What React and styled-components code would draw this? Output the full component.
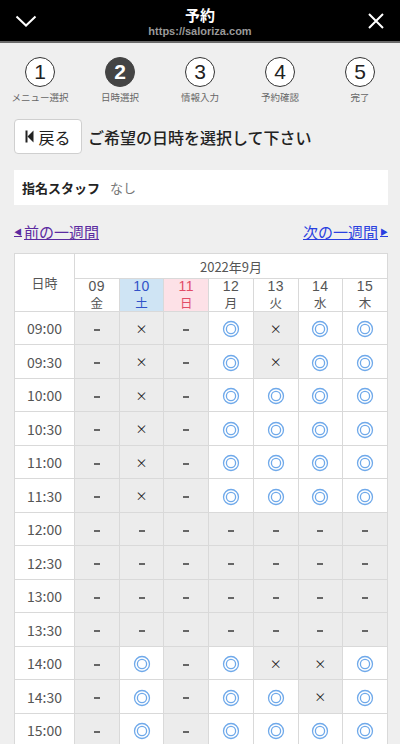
import React from 'react';
import styled, { createGlobalStyle } from 'styled-components';

const GlobalStyle = createGlobalStyle`
  body {
    margin: 0;
    background: #efefef;
    font-family: "Noto Sans CJK JP", "Noto Sans", sans-serif;
    color: #333;
  }
`;

const Page = styled.div`
  width: 400px;
  min-height: 744px;
  background: #efefef;
`;

const Header = styled.header`
  height: 41px;
  background: #000;
  border-bottom: 2px solid #6a6a6a;
  display: grid;
  grid-template-columns: 60px 1fr 60px;
  align-items: center;
`;

const HeaderTitle = styled.div`
  display: flex;
  flex-direction: column;
  align-items: center;
  line-height: 1;
`;

const TitleMain = styled.div`
  color: #fff;
  font-size: 15px;
  font-weight: 700;
  margin-top: 2px;
`;

const TitleUrl = styled.div`
  color: #9a9a9a;
  font-size: 11px;
  font-weight: 700;
  margin-top: 4px;
  font-family: "Liberation Sans", Arial, sans-serif;
`;

const IconCell = styled.div`
  display: flex;
  justify-content: ${(p) => (p.right ? 'flex-end' : 'flex-start')};
  padding: ${(p) => (p.right ? '0 16px 0 0' : '0 0 0 15px')};
`;

const Steps = styled.ol`
  list-style: none;
  margin: 0;
  padding: 14px 0 0;
  display: grid;
  grid-template-columns: repeat(5, 80px);
`;

const Step = styled.li`
  display: flex;
  flex-direction: column;
  align-items: center;
`;

const StepCircle = styled.div`
  width: 30px;
  height: 30px;
  box-sizing: border-box;
  border-radius: 50%;
  border: 1.5px solid ${(p) => (p.active ? '#444' : '#333')};
  background: ${(p) => (p.active ? '#444' : '#fff')};
  color: ${(p) => (p.active ? '#fff' : '#222')};
  font-weight: ${(p) => (p.active ? 700 : 400)};
  font-family: "Liberation Sans", Arial, sans-serif;
  font-size: 21px;
  display: flex;
  align-items: center;
  justify-content: center;
`;

const StepLabel = styled.div`
  font-size: 9.5px;
  color: #666;
  margin-top: 3px;
  line-height: 14px;
`;

const Heading = styled.div`
  display: flex;
  align-items: center;
  gap: 6px;
  padding: 15px 14px 0;
`;

const BackButton = styled.button`
  width: 68px;
  height: 35px;
  box-sizing: border-box;
  background: #fff;
  border: 1px solid #cfcfcf;
  border-radius: 4px;
  display: flex;
  align-items: center;
  justify-content: center;
  gap: 4px;
  font-family: inherit;
  font-size: 16px;
  color: #222;
  padding: 0;
`;

const HeadingText = styled.h1`
  margin: 0;
  font-size: 16px;
  font-weight: 500;
  color: #222;
`;

const StaffRow = styled.div`
  margin: 16px 12px 0 14px;
  height: 35px;
  background: #fff;
  display: flex;
  align-items: center;
  padding-left: 8px;
  font-size: 13px;
`;

const StaffLabel = styled.span`
  font-weight: 700;
  color: #222;
  width: 88px;
`;

const StaffValue = styled.span`
  color: #777;
`;

const WeekNav = styled.nav`
  display: flex;
  justify-content: space-between;
  padding: 16px 12px 0 14px;
  height: 22px;
`;

const WeekLink = styled.a`
  font-size: 15px;
  color: ${(p) => (p.visited ? '#5b2aa0' : '#2a3fe0')};
  text-decoration: underline;
  display: flex;
  align-items: center;
  gap: 2px;
  line-height: 20px;
`;

const Arrow = styled.span`
  font-size: 8px;
  text-decoration: none;
  display: inline-block;
`;

const Table = styled.table`
  margin: 10px 0 0 14px;
  width: 374px;
  border-collapse: collapse;
  table-layout: fixed;
  font-size: 13px;
  color: #555;
  text-align: center;
`;

const Th = styled.th`
  border: 1px solid #d9d9d9;
  background: ${(p) => p.bg || '#fff'};
  color: ${(p) => p.color || '#555'};
  font-weight: 400;
  padding: 0;
  line-height: 15px;
  height: ${(p) => p.h || 'auto'};
`;

const DayNum = styled.div`
  font-family: "Liberation Sans", Arial, sans-serif;
  font-size: 14px;
  line-height: 15px;
  letter-spacing: 0.5px;
`;

const DayName = styled.div`
  font-size: 12.5px;
  line-height: 16px;
  margin-top: 1px;
`;

const Tr = styled.tr`
  height: 33px;
  &:nth-child(even) {
    height: 34px;
  }
`;

const TimeCell = styled.td`
  border: 1px solid #d9d9d9;
  background: #fff;
  color: #555;
  font-size: 14px;
  padding: 0;
`;

const SlotCell = styled.td`
  border: 1px solid #d9d9d9;
  background: ${(p) => (p.open ? '#fff' : '#ececec')};
  padding: 0;
  vertical-align: middle;
`;

const Dash = styled.span`
  display: inline-block;
  width: 6px;
  height: 2px;
  background: #666;
  vertical-align: middle;
`;

const Cross = styled.span`
  font-size: 12px;
  color: #222;
  line-height: 1;
`;

const ChevronDown = () => (
  <svg width="22" height="14" viewBox="0 0 22 14">
    <polyline points="1.5,2.5 11,11.5 20.5,2.5" fill="none" stroke="#fff" strokeWidth="2" />
  </svg>
);

const CloseIcon = () => (
  <svg width="16" height="16" viewBox="0 0 16 16">
    <path d="M1 1L15 15M15 1L1 15" stroke="#fff" strokeWidth="2" />
  </svg>
);

const BackIcon = () => (
  <svg width="9" height="13" viewBox="0 0 9 13">
    <rect x="0.5" y="0.5" width="2" height="12" fill="#222" />
    <polygon points="8.5,0.5 8.5,12.5 2.5,6.5" fill="#222" />
  </svg>
);

const DoubleCircle = () => (
  <svg width="18" height="18" viewBox="0 0 18 18" style={{ verticalAlign: 'middle' }}>
    <circle cx="9" cy="9" r="7.5" fill="none" stroke="#6fa9ea" strokeWidth="1.3" />
    <circle cx="9" cy="9" r="4.6" fill="none" stroke="#6fa9ea" strokeWidth="1.3" />
  </svg>
);

const steps = ['メニュー選択', '日時選択', '情報入力', '予約確認', '完了'];

const days = [
  { n: '09', w: '金' },
  { n: '10', w: '土', bg: '#cfe4f4', color: '#3152c8' },
  { n: '11', w: '日', bg: '#fde1e7', color: '#e24b66' },
  { n: '12', w: '月' },
  { n: '13', w: '火' },
  { n: '14', w: '水' },
  { n: '15', w: '木' },
];

const slots = [
  ['09:00', '-x-oxoo'],
  ['09:30', '-x-oxoo'],
  ['10:00', '-x-oooo'],
  ['10:30', '-x-oooo'],
  ['11:00', '-x-oooo'],
  ['11:30', '-x-oooo'],
  ['12:00', '-------'],
  ['12:30', '-------'],
  ['13:00', '-------'],
  ['13:30', '-------'],
  ['14:00', '-o-oxxo'],
  ['14:30', '-o-ooxo'],
  ['15:00', '-o-oooo'],
];

const Slot = ({ mark }) => {
  if (mark === 'o') return <SlotCell open><DoubleCircle /></SlotCell>;
  if (mark === 'x') return <SlotCell><Cross>×</Cross></SlotCell>;
  return <SlotCell><Dash /></SlotCell>;
};

const App = () => (
  <Page>
    <GlobalStyle />
    <Header>
      <IconCell><ChevronDown /></IconCell>
      <HeaderTitle>
        <TitleMain>予約</TitleMain>
        <TitleUrl>https://saloriza.com</TitleUrl>
      </HeaderTitle>
      <IconCell right><CloseIcon /></IconCell>
    </Header>

    <Steps>
      {steps.map((label, i) => (
        <Step key={label}>
          <StepCircle active={i === 1}>{i + 1}</StepCircle>
          <StepLabel>{label}</StepLabel>
        </Step>
      ))}
    </Steps>

    <Heading>
      <BackButton type="button">
        <BackIcon />
        戻る
      </BackButton>
      <HeadingText>ご希望の日時を選択して下さい</HeadingText>
    </Heading>

    <StaffRow>
      <StaffLabel>指名スタッフ</StaffLabel>
      <StaffValue>なし</StaffValue>
    </StaffRow>

    <WeekNav>
      <WeekLink visited href="#prev">
        <Arrow>◀</Arrow>
        前の一週間
      </WeekLink>
      <WeekLink href="#next">
        次の一週間
        <Arrow>▶</Arrow>
      </WeekLink>
    </WeekNav>

    <Table>
      <colgroup>
        <col style={{ width: 60 }} />
        {days.map((d) => <col key={d.n} />)}
      </colgroup>
      <thead>
        <tr>
          <Th rowSpan={2}>日時</Th>
          <Th colSpan={7} h="24px">2022年9月</Th>
        </tr>
        <tr>
          {days.map((d) => (
            <Th key={d.n} bg={d.bg} color={d.color} h="32px">
              <DayNum>{d.n}</DayNum>
              <DayName>{d.w}</DayName>
            </Th>
          ))}
        </tr>
      </thead>
      <tbody>
        {slots.map(([time, marks]) => (
          <Tr key={time}>
            <TimeCell>{time}</TimeCell>
            {marks.split('').map((m, i) => <Slot key={days[i].n} mark={m} />)}
          </Tr>
        ))}
      </tbody>
    </Table>
  </Page>
);

export default App;
